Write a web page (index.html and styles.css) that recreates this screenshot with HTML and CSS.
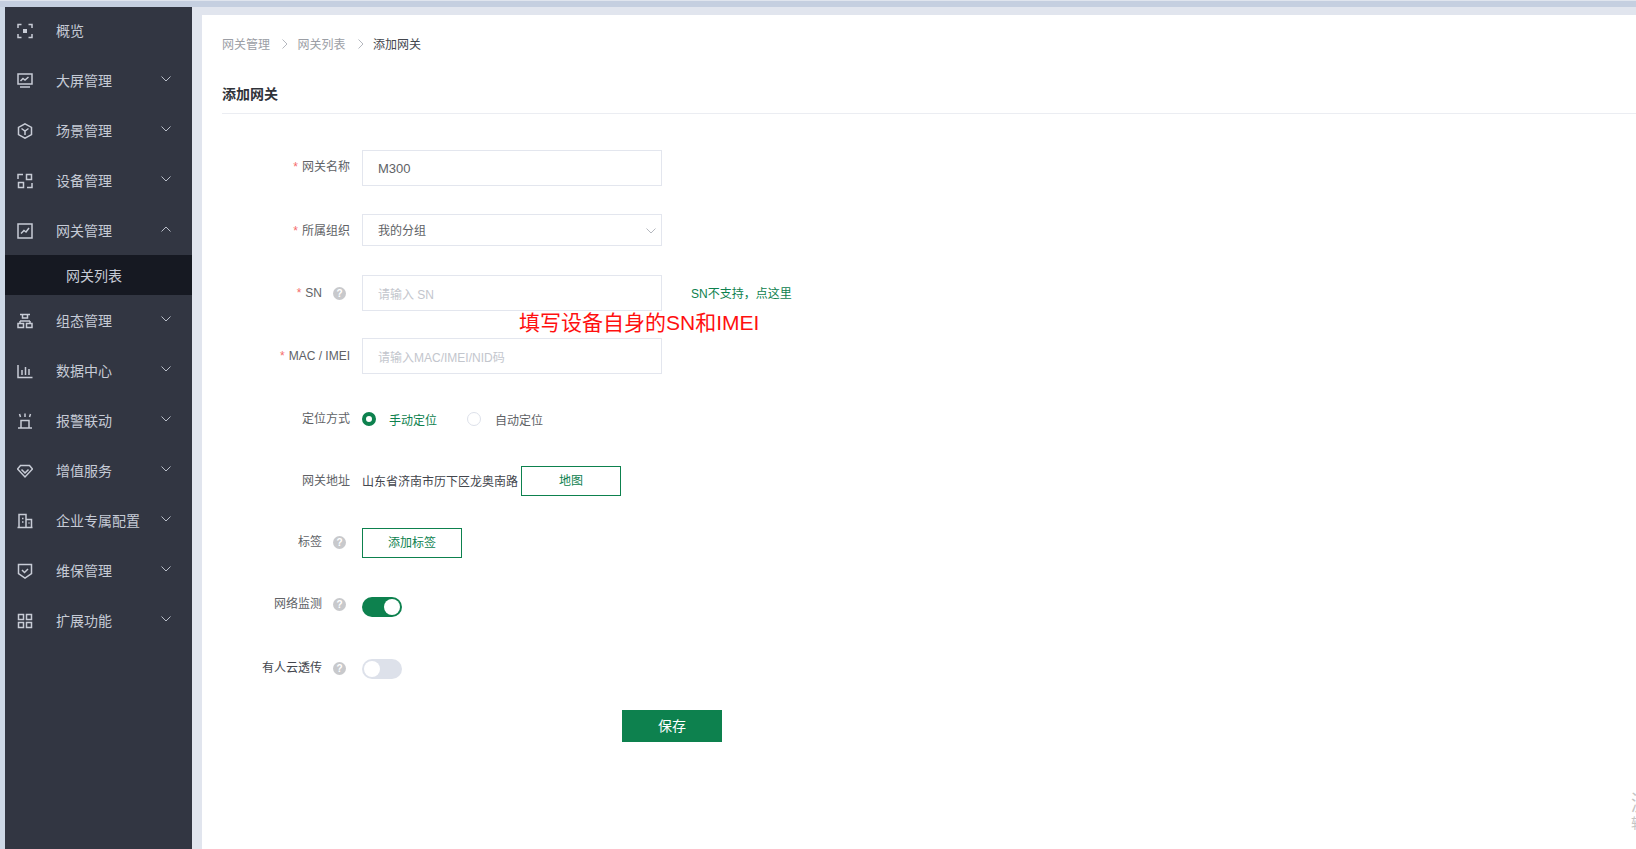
FILE: index.html
```html
<!DOCTYPE html>
<html lang="zh-CN">
<head>
<meta charset="utf-8">
<title>添加网关</title>
<link rel="stylesheet" href="styles.css">
</head>
<body>
<div class="topstrip"></div>
<div class="app">
  <aside class="sidebar">
    <ul class="menu">
      <li class="item"><svg class="ico" viewBox="0 0 16 16"><path d="M1 5V1.500h3.500M11.500 1.500H15V5M15 11v3.500h-3.500M4.500 14.500H1V11"/><rect x="6" y="6" width="4" height="4" class="fill"/></svg><span class="name">概览</span></li>
      <li class="item"><svg class="ico" viewBox="0 0 16 16"><rect x="1" y="1" width="14" height="10"/><path d="M3.500 8l2.500-2.500 2 1.500 3.500-3M3 14h10"/></svg><span class="name">大屏管理</span><svg class="chev" viewBox="0 0 10 6"><path d="M.5.500L5 5l4.500-4.500"/></svg></li>
      <li class="item"><svg class="ico" viewBox="0 0 16 16"><path d="M8 .8l6.500 3.600v7.200L8 15.200l-6.500-3.600V4.400zM4.500 5.500L8 8l3.500-2.500M8 8v4"/></svg><span class="name">场景管理</span><svg class="chev" viewBox="0 0 10 6"><path d="M.5.500L5 5l4.500-4.500"/></svg></li>
      <li class="item"><svg class="ico" viewBox="0 0 16 16"><path d="M6 1.500H1V6M10 14.500h5V10"/><rect x="9.500" y="1.500" width="5" height="5"/><rect x="1.500" y="9.500" width="5" height="5"/></svg><span class="name">设备管理</span><svg class="chev" viewBox="0 0 10 6"><path d="M.5.500L5 5l4.500-4.500"/></svg></li>
      <li class="item"><svg class="ico" viewBox="0 0 16 16"><rect x="1" y="1" width="14" height="14"/><path d="M4 10.500l3-3 2 1.500 3-4"/></svg><span class="name">网关管理</span><svg class="chev" viewBox="0 0 10 6"><path d="M.5 5.500L5 1l4.500 4.500"/></svg></li>
      <li class="subitem">网关列表</li>
      <li class="item"><svg class="ico" viewBox="0 0 16 16"><path d="M3 1.500h10M5.500 1.500v3.500h5V1.500M3 8h10M3 8v2M13 8v2"/><rect x="1" y="10.500" width="5.500" height="4"/><rect x="9.500" y="10.500" width="5.500" height="4"/></svg><span class="name">组态管理</span><svg class="chev" viewBox="0 0 10 6"><path d="M.5.500L5 5l4.500-4.500"/></svg></li>
      <li class="item"><svg class="ico" viewBox="0 0 16 16"><path d="M1 2v12.500h14.500M5 7v5M8.500 4v8M12 6v6"/></svg><span class="name">数据中心</span><svg class="chev" viewBox="0 0 10 6"><path d="M.5.500L5 5l4.500-4.500"/></svg></li>
      <li class="item"><svg class="ico" viewBox="0 0 16 16"><path d="M4 15V7.500h8V15M1 15h14M2.500 1l1 3M8 .5v3.500M13.500 1l-1 3"/></svg><span class="name">报警联动</span><svg class="chev" viewBox="0 0 10 6"><path d="M.5.500L5 5l4.500-4.500"/></svg></li>
      <li class="item"><svg class="ico" viewBox="0 0 16 16"><path d="M3.500 2.500h9L15.500 6 8 14 .5 6zM4.500 6.500L8 10l3.500-3.500"/></svg><span class="name">增值服务</span><svg class="chev" viewBox="0 0 10 6"><path d="M.5.500L5 5l4.500-4.500"/></svg></li>
      <li class="item"><svg class="ico" viewBox="0 0 16 16"><path d="M.5 14.500h15M2 14.500V1.500h7v13M9 6.500h5.500v8M5 5.500h1.500M5 9h1.500M11.500 10h1"/></svg><span class="name">企业专属配置</span><svg class="chev" viewBox="0 0 10 6"><path d="M.5.500L5 5l4.500-4.500"/></svg></li>
      <li class="item"><svg class="ico" viewBox="0 0 16 16"><path d="M1.500 1.500h13v9L8 15l-6.500-4.500zM5 7l2.500 2.500L11 6"/></svg><span class="name">维保管理</span><svg class="chev" viewBox="0 0 10 6"><path d="M.5.500L5 5l4.500-4.500"/></svg></li>
      <li class="item"><svg class="ico" viewBox="0 0 16 16"><rect x="1.500" y="1.500" width="5" height="5"/><rect x="9.500" y="1.500" width="5" height="5"/><rect x="1.500" y="9.500" width="5" height="5"/><rect x="9.500" y="9.500" width="5" height="5"/></svg><span class="name">扩展功能</span><svg class="chev" viewBox="0 0 10 6"><path d="M.5.500L5 5l4.500-4.500"/></svg></li>
    </ul>
  </aside>
  <main class="main">
    <section class="card">
      <nav class="crumbs">
        <span>网关管理</span>
        <svg class="sep" viewBox="0 0 6 10"><path d="M.5.500L5 5 .5 9.500"/></svg>
        <span>网关列表</span>
        <svg class="sep" viewBox="0 0 6 10"><path d="M.5.500L5 5 .5 9.500"/></svg>
        <span class="current">添加网关</span>
      </nav>
      <h1 class="title">添加网关</h1>
      <form class="form">
        <div class="row">
          <div class="label top"><i class="req">*</i>网关名称</div>
          <input class="input value" value="M300">
        </div>
        <div class="row">
          <div class="label top"><i class="req">*</i>所属组织</div>
          <div class="input select">我的分组<svg class="select-chev" viewBox="0 0 10 6"><path d="M.5.500L5 5l4.500-4.500"/></svg></div>
        </div>
        <div class="row">
          <div class="label has-help lower"><i class="req">*</i>SN<b class="help">?</b></div>
          <input class="input" placeholder="请输入 SN">
          <a class="sn-link">SN不支持，点这里</a>
        </div>
        <div class="row">
          <div class="label"><i class="req">*</i>MAC / IMEI</div>
          <input class="input" placeholder="请输入MAC/IMEI/NID码">
        </div>
        <div class="row">
          <div class="label">定位方式</div>
          <div class="ctl">
            <span class="radio on"></span><span class="radio-text on">手动定位</span>
            <span class="radio"></span><span class="radio-text">自动定位</span>
          </div>
        </div>
        <div class="row">
          <div class="label">网关地址</div>
          <div class="ctl"><span class="addr">山东省济南市历下区龙奥南路</span><span class="btn">地图</span></div>
        </div>
        <div class="row">
          <div class="label has-help">标签<b class="help">?</b></div>
          <div class="ctl"><span class="btn">添加标签</span></div>
        </div>
        <div class="row">
          <div class="label has-help high">网络监测<b class="help">?</b></div>
          <div class="ctl"><span class="switch on"></span></div>
        </div>
        <div class="row">
          <div class="label has-help dark">有人云透传<b class="help">?</b></div>
          <div class="ctl"><span class="switch"></span></div>
        </div>
        <div class="row save-row"><span class="save">保存</span></div>
      </form>
    </section>
  </main>
</div>
<div class="note">填写设备自身的SN和IMEI</div>
<div class="watermark"><div class="wm-big">激活 Windows</div><div class="wm-small">转到“设置”以激活 Windows。</div></div>
</body>
</html>
```
FILE: styles.css
```css
* { box-sizing: border-box; }
html, body { margin: 0; padding: 0; height: 849px; overflow: hidden; }
body {
  background: #e1e5ee;
  font-family: "Liberation Sans", "Noto Sans CJK SC", sans-serif;
  font-size: 12px;
  color: #606266;
  position: relative;
}
.topstrip { height: 7px; background: #c5cfe0; border-top: 1px solid #e0e5ee; }
.app { display: flex; height: 842px; padding-left: 5px; background: linear-gradient(to right, #cdd8e6 5px, #e1e5ee 5px); }

.sidebar { width: 187px; flex: none; background: #323642; color: #c6cbd6; font-size: 14px; }
.menu { list-style: none; margin: -2px 0 0; padding: 0; }
.item { height: 50px; display: flex; align-items: center; padding-left: 12px; position: relative; }
.ico { width: 16px; height: 16px; flex: none; margin-top: 2px; fill: none; stroke: #c8ccd6; stroke-width: 1.500; }
.ico .fill { fill: #c8ccd6; stroke: none; }
.name { margin-left: 23px; }
.chev { position: absolute; left: 156px; top: 21px; width: 10px; height: 6px; fill: none; stroke: #b9bec9; stroke-width: 1; }
.subitem { height: 40px; line-height: 42px; background: #161922; padding-left: 61px; }

.main { flex: 1; padding: 8px 0 0 10px; }
.card { height: 100%; background: #fff; padding-left: 20px; }
.crumbs { display: flex; align-items: center; height: 43px; padding-top: 14px; color: #9b9ea5; }
.crumbs .current { color: #43464d; }
.sep { width: 6px; height: 10px; margin: 0 9.500px 0 12px; fill: none; stroke: #b5b8bf; stroke-width: 1; }
.title { margin: 0; height: 56px; padding-top: 24px; font-size: 14px; line-height: 24px; font-weight: 700; color: #30333a; border-bottom: 1px solid #ebedf2; }

.form { display: grid; margin-top: 36px; grid-template-rows: 64px 61px 63px 63px 62px 62px 64px 62px 59px auto; }
.row { display: flex; align-items: flex-start; }
.label { width: 128px; margin-right: 12px; flex: none; text-align: right; line-height: 36px; }
.label.top { line-height: 34px; }
.label.has-help { padding-right: 4px; display: flex; justify-content: flex-end; align-items: center; height: 34px; }
.label.has-help.lower { height: 36px; }
.label.has-help.high { height: 30px; }
.label.dark { color: #43464d; }
.req { font-style: normal; color: #f56c6c; margin-right: 4px; font-size: 12px; }
.help { width: 13px; height: 13px; margin-left: 11px; border-radius: 50%; background: #c8c9cc; color: #fff; font: 700 10px/13px "Liberation Sans", sans-serif; text-align: center; }

.input { width: 300px; height: 36px; padding: 0 15px; border: 1px solid #e3e6ee; border-radius: 0; outline: none; background: #fff; font: 12px/34px "Liberation Sans", "Noto Sans CJK SC", sans-serif; color: #606266; }
.input.value { font-size: 13px; }
.input:placeholder-shown { padding-top: 3px; }
.input::placeholder { color: #c3c6cd; opacity: 1; }
.select { height: 32px; line-height: 32px; position: relative; }
.select-chev { position: absolute; right: 5px; top: 13px; width: 10px; height: 6px; fill: none; stroke: #b5b8bf; stroke-width: 1; }
.sn-link { margin-left: 29px; line-height: 39px; color: #0d814e; }

.ctl { height: 36px; display: flex; align-items: center; }
.radio { width: 14px; height: 14px; border-radius: 50%; border: 1px solid #dde1ea; background: #fff; flex: none; }
.radio.on { border: 4.500px solid #0d814e; }
.radio-text { margin-left: 13px; margin-right: 30px; color: #606266; }
.radio-text:last-child { margin-left: 14px; }
.radio-text.on { color: #0d814e; }
.addr { color: #43464d; margin-right: 3px; margin-bottom: 2px; }
.btn { width: 100px; height: 30px; line-height: 29px; border: 1px solid #0d814e; text-align: center; color: #0d814e; }
.switch { width: 40px; height: 20px; border-radius: 10px; background: #dde1ea; position: relative; display: block; }
.switch::after { content: ""; position: absolute; left: 2px; top: 2px; width: 16px; height: 16px; border-radius: 50%; background: #fff; }
.switch.on { background: #0d814e; }
.switch.on::after { left: 22px; }
.save-row { padding-left: 400px; }
.save { width: 100px; height: 32px; background: #0d814e; color: #fff; font-size: 14px; line-height: 32px; text-align: center; }

.note { position: absolute; left: 519px; top: 308px; font-size: 21px; line-height: 30px; color: #ff1010; white-space: nowrap; }
.watermark { position: absolute; left: 1631px; top: 788px; white-space: nowrap; color: #c4c4c4; }
.wm-big { font-size: 21px; line-height: 30px; }
.wm-small { font-size: 14px; line-height: 24px; margin-top: -7px; }
```
